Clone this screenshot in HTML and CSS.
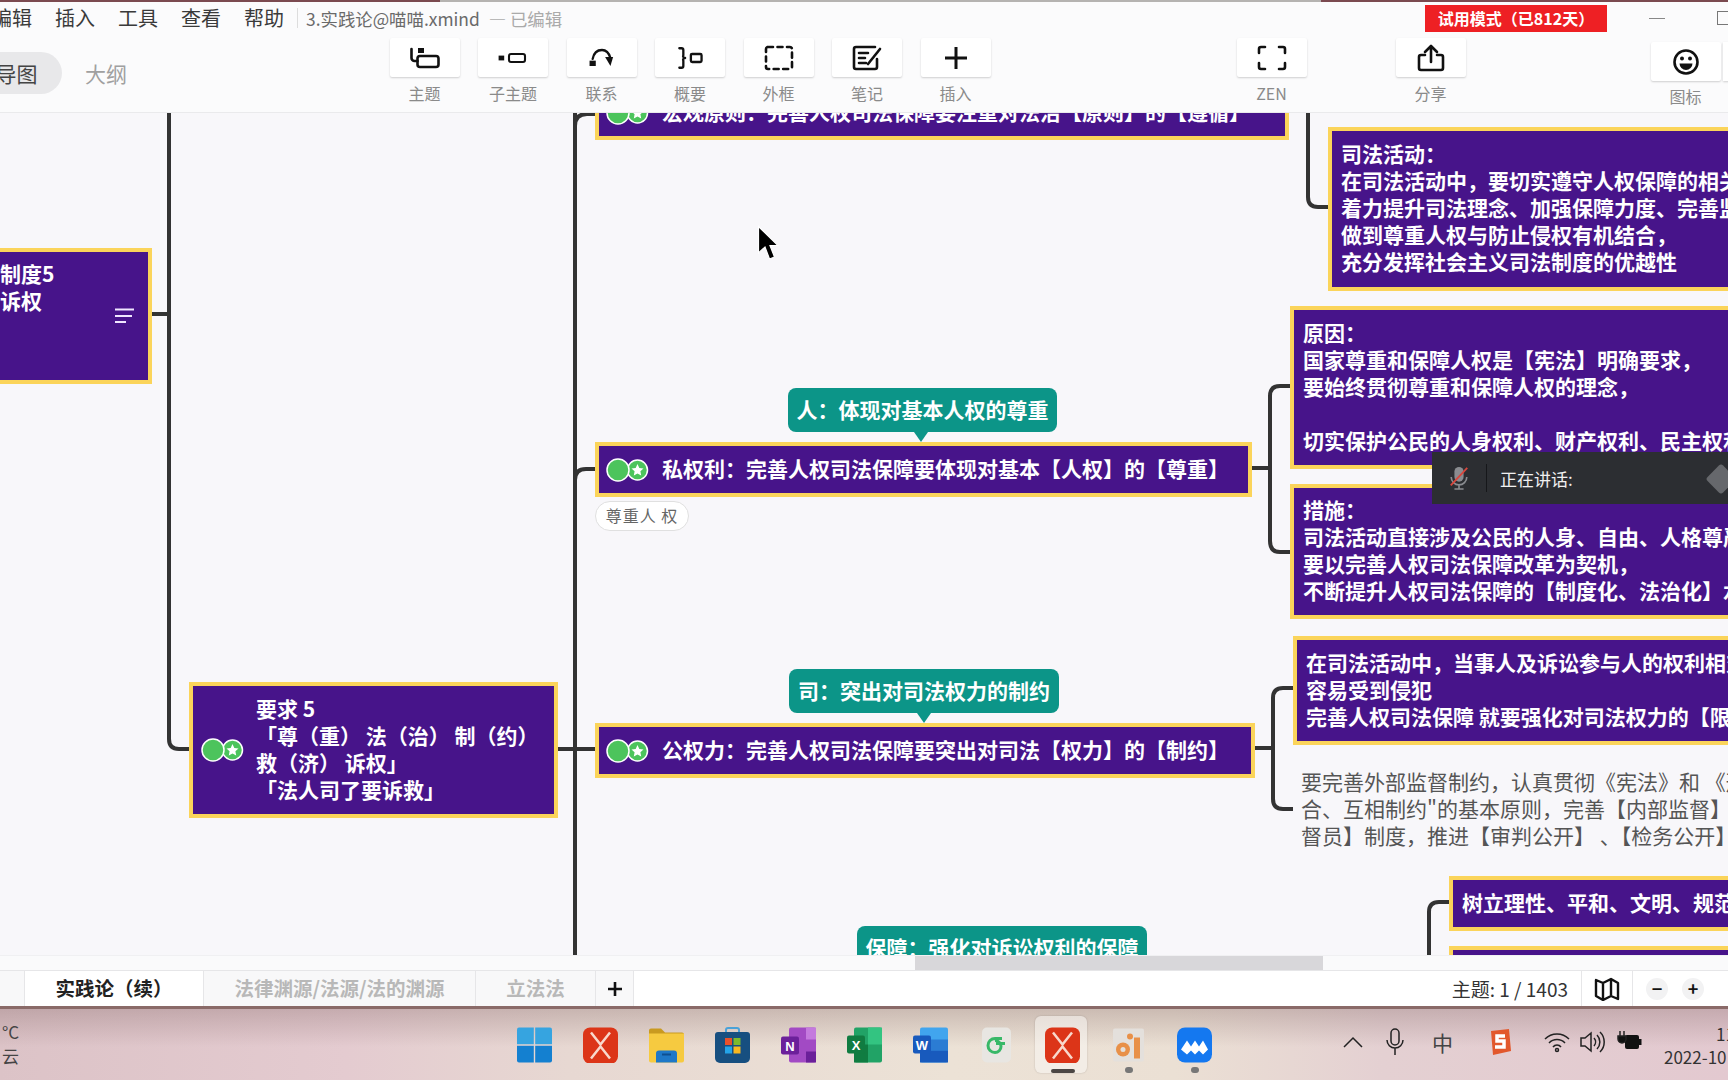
FILE: index.html
```html
<!DOCTYPE html>
<html lang="zh-CN">
<head>
<meta charset="utf-8">
<title>XMind</title>
<link rel="stylesheet" href="styles.css">
</head>
<body>
<div class="app">
  <div class="wall-strip"></div>
  <header class="header">
    <div class="titlebar">
      <nav class="menu"><span>编辑</span><span>插入</span><span>工具</span><span>查看</span><span>帮助</span></nav>
      <div class="title-sep"></div>
      <div class="doc-title">3.实践论@喵喵.xmind<span class="doc-state">— 已编辑</span></div>
      <div class="trial">试用模式（已812天）</div>
      <div class="win-min"></div>
      <div class="win-max"></div>
    </div>
    <div class="toolbar">
      <div class="seg">
        <div class="seg-on">导图</div>
        <div class="seg-off">大纲</div>
      </div>
      <div class="tools">
        <div class="tool"><div class="tool-btn"><svg class="ico" viewBox="0 0 32 30"><rect x="8.5" y="13" width="21" height="11" rx="2.5" class="s"/><path d="M2.5 6v9a3 3 0 0 0 3 3h3" class="s"/><rect x="9" y="5" width="6" height="5" class="f"/></svg></div><div class="tool-label">主题</div></div>
        <div class="tool"><div class="tool-btn"><svg class="ico" viewBox="0 0 40 30"><rect x="2" y="12" width="7" height="6" class="f"/><rect x="15" y="10" width="20" height="10" rx="2.5" class="s"/></svg></div><div class="tool-label">子主题</div></div>
        <div class="tool"><div class="tool-btn"><svg class="ico" viewBox="0 0 36 30"><rect x="4" y="18" width="7" height="6" class="f"/><path d="M7.5 16C9 8 14 6 18 6c5 0 8 4 9.500 9" class="s"/><path d="M21.500 14l9 0-3 10z" class="f"/></svg></div><div class="tool-label">联系</div></div>
        <div class="tool"><div class="tool-btn"><svg class="ico" viewBox="0 0 36 30"><path d="M6 4h2.500a2 2 0 0 1 2 2v6a2 2 0 0 0 2 3 2 2 0 0 0-2 3v6a2 2 0 0 1-2 2H6" class="s"/><rect x="19" y="10.500" width="12" height="9" rx="1.500" class="s"/></svg></div><div class="tool-label">概要</div></div>
        <div class="tool"><div class="tool-btn"><svg class="ico" viewBox="0 0 32 30"><rect x="3" y="4" width="26" height="22" rx="2" class="s dash"/></svg></div><div class="tool-label">外框</div></div>
        <div class="tool"><div class="tool-btn"><svg class="ico" viewBox="0 0 32 30"><path d="M24 4H5a2 2 0 0 0-2 2v18a2 2 0 0 0 2 2h19a2 2 0 0 0 2-2v-8" class="s"/><path d="M8 10h9M8 15h6M8 20h7" class="s"/><path d="M17 21l12-15" class="s"/></svg></div><div class="tool-label">笔记</div></div>
        <div class="tool"><div class="tool-btn"><svg class="ico" viewBox="0 0 32 30"><path d="M16 4v22M5 15h22" class="s thick"/></svg></div><div class="tool-label">插入</div></div>
      </div>
      <div class="tool tool-zen"><div class="tool-btn"><svg class="ico" viewBox="0 0 32 30"><path d="M9 4H5a2 2 0 0 0-2 2v4M23 4h4a2 2 0 0 1 2 2v4M3 20v4a2 2 0 0 0 2 2h4M29 20v4a2 2 0 0 1-2 2h-4" class="s"/></svg></div><div class="tool-label">ZEN</div></div>
      <div class="tool tool-share"><div class="tool-btn"><svg class="ico" viewBox="0 0 32 30"><path d="M10 12H6a2 2 0 0 0-2 2v11a2 2 0 0 0 2 2h20a2 2 0 0 0 2-2V14a2 2 0 0 0-2-2h-4" class="s"/><path d="M16 19V3M10 9l6-6 6 6" class="s"/></svg></div><div class="tool-label">分享</div></div>
      <div class="tool tool-icons"><div class="tool-btn"><svg class="ico" viewBox="0 0 32 30"><circle cx="16" cy="15" r="11.500" class="s"/><circle cx="12" cy="11.500" r="2" class="f"/><circle cx="20" cy="11.500" r="2" class="f"/><path d="M9.500 16.500h13a6.500 6.500 0 0 1-13 0z" class="f"/></svg></div><div class="tool-label">图标</div></div>
      <div class="tool-next"></div>
    </div>
  </header>

  <main class="canvas">
    <svg class="links" viewBox="0 113 1728 842">
      <path d="M152 314H169M169 113V739Q169 749 179 749H189"/>
      <path d="M558 749H595M575 113V955"/>
      <path d="M575 126Q575 114 587 114H595M575 480Q575 469 586 469H595"/>
      <path d="M1308 113V197Q1308 207 1318 207H1328"/>
      <path d="M1252 468H1270M1290 386H1280Q1270 386 1270 396V541Q1270 552 1280 552H1290"/>
      <path d="M1255 748H1273M1293 688H1283Q1273 688 1273 698V799Q1273 809 1283 809H1293"/>
      <path d="M1449 902H1439Q1429 902 1429 912V955"/>
    </svg>

    <div class="node n-sys">
      <div>制度5<br>诉权</div>
      <svg class="note" viewBox="0 0 20 16"><path d="M0 1.500H19M0 8H17M0 14H11"/></svg>
    </div>

    <div class="node n-req">
      <svg class="marks" viewBox="0 0 44 24"><circle cx="31.500" cy="12" r="10" class="m2"/><path d="M31.500 6l1.800 3.900 4.200.5-3.100 2.900.8 4.200-3.700-2.100-3.700 2.100.8-4.200-3.100-2.900 4.200-.5z" class="star"/><circle cx="12" cy="12" r="11" class="m1"/></svg>
      <div class="req-text">要求 5<br>「尊（重） 法（治） 制（约）<br>救（济） 诉权」<br>「法人司了要诉救」</div>
    </div>

    <div class="node n-macro">
      <svg class="marks" viewBox="0 0 44 24"><circle cx="31.500" cy="12" r="10" class="m2"/><path d="M31.500 6l1.800 3.900 4.200.5-3.100 2.900.8 4.200-3.700-2.100-3.700 2.100.8-4.200-3.100-2.900 4.200-.5z" class="star"/><circle cx="12" cy="12" r="11" class="m1"/></svg>
      <div>宏观原则：完善人权司法保障要注重对法治【原则】的【遵循】</div>
    </div>

    <div class="node n-judicial">司法活动：<br>在司法活动中，要切实遵守人权保障的相关规定，<br>着力提升司法理念、加强保障力度、完善监督机制，<br>做到尊重人权与防止侵权有机结合，<br>充分发挥社会主义司法制度的优越性</div>

    <div class="bubble b-ren">人：体现对基本人权的尊重</div>
    <div class="node n-private">
      <svg class="marks" viewBox="0 0 44 24"><circle cx="31.500" cy="12" r="10" class="m2"/><path d="M31.500 6l1.800 3.900 4.200.5-3.100 2.900.8 4.200-3.700-2.100-3.700 2.100.8-4.200-3.100-2.900 4.200-.5z" class="star"/><circle cx="12" cy="12" r="11" class="m1"/></svg>
      <div>私权利：完善人权司法保障要体现对基本【人权】的【尊重】</div>
    </div>
    <div class="pill">尊重人 权</div>

    <div class="node n-reason">原因：<br>国家尊重和保障人权是【宪法】明确要求，<br>要始终贯彻尊重和保障人权的理念，<br><br>切实保护公民的人身权利、财产权利、民主权利</div>
    <div class="node n-measure">措施：<br>司法活动直接涉及公民的人身、自由、人格尊严，<br>要以完善人权司法保障改革为契机，<br>不断提升人权司法保障的【制度化、法治化】水平</div>

    <div class="bubble b-si">司：突出对司法权力的制约</div>
    <div class="node n-public">
      <svg class="marks" viewBox="0 0 44 24"><circle cx="31.500" cy="12" r="10" class="m2"/><path d="M31.500 6l1.800 3.900 4.200.5-3.100 2.900.8 4.200-3.700-2.100-3.700 2.100.8-4.200-3.100-2.900 4.200-.5z" class="star"/><circle cx="12" cy="12" r="11" class="m1"/></svg>
      <div>公权力：完善人权司法保障要突出对司法【权力】的【制约】</div>
    </div>
    <div class="node n-party">在司法活动中，当事人及诉讼参与人的权利相对<br>容易受到侵犯<br>完善人权司法保障 就要强化对司法权力的【限制】</div>
    <div class="plain">要完善外部监督制约，认真贯彻《宪法》和 《刑事诉讼法》<br>合、互相制约"的基本原则，完善【内部监督】 制度<br>督员】制度，推进【审判公开】 、【检务公开】</div>

    <div class="node n-tree">树立理性、平和、文明、规范的司法理念</div>
    <div class="node n-next"></div>
    <div class="bubble b-bao">保障：强化对诉讼权利的保障</div>

    <div class="speaking">
      <svg class="mic-off" viewBox="0 0 24 28"><rect x="7" y="2" width="10" height="16" rx="5" class="mic-b"/><path d="M3.500 13a8.500 8.500 0 0 0 17 0M12 22v4M7 26h10" class="mic-l"/><path d="M3 22L21 3" class="mic-x"/></svg>
      <div class="speak-sep"></div>
      <div class="speak-text">正在讲话:</div>
      <div class="speak-grip"></div>
    </div>

    <svg class="cursor" viewBox="0 0 22 36"><path d="M1.500 1.500V28l6.500-6 4.500 12 5-2-4.500-11.500H21z"/></svg>
  </main>

  <div class="hscroll"><div class="hthumb"></div></div>

  <div class="tabs">
    <div class="tab-stub"></div>
    <div class="tab tab-on">实践论（续）</div>
    <div class="tab tab-law">法律渊源/法源/法的渊源</div>
    <div class="tab tab-leg">立法法</div>
    <div class="tab-add"><svg viewBox="0 0 18 18"><path d="M9 2v14M2 9h14"/></svg></div>
    <div class="status">
      <div class="count">主题: 1 / 1403</div>
      <div class="map"><svg viewBox="0 0 26 24"><path d="M2 3l7 3 8-4 7 4v16l-7-3-8 4-7-4zM9 6v16M17 2v16" /></svg></div>
      <div class="zoom-ctl"><span class="zb">−</span><span class="zb">+</span></div>
    </div>
  </div>

  <footer class="taskbar">
    <div class="weather"><div>°C</div><div>云</div></div>
    <div class="apps">
      <div class="app-ico"><svg viewBox="0 0 35 35"><path d="M0 2a2 2 0 0 1 2-2h14.800v16.800H0z" class="w1"/><path d="M18.200 0H33a2 2 0 0 1 2 2v14.800H18.200z" class="w1"/><path d="M0 18.200h16.800V35H2a2 2 0 0 1-2-2z" class="w2"/><path d="M18.200 18.200H35V33a2 2 0 0 1-2 2H18.200z" class="w2"/></svg></div>
      <div class="app-ico"><svg viewBox="0 0 35 35"><rect width="35" height="36" rx="7" class="xm"/><path d="M8 5l9.500 12L27 5M8 31l9.500-12L27 31" class="xm-l"/></svg></div>
      <div class="app-ico"><svg viewBox="0 0 35 35"><path d="M0 3a2 2 0 0 1 2-2h10l4 4H33a2 2 0 0 1 2 2v6H0z" class="fo1"/><path d="M0 6h35v27a2 2 0 0 1-2 2H2a2 2 0 0 1-2-2z" class="fo2"/><path d="M7 26a3 3 0 0 1 3-3h15a3 3 0 0 1 3 3v9H7z" class="fo3"/><rect x="13" y="26" width="9" height="2" class="fo4"/></svg></div>
      <div class="app-ico"><svg viewBox="0 0 35 36"><path d="M11 7V3a2 2 0 0 1 2-2h9a2 2 0 0 1 2 2v4" class="st-h"/><path d="M0 8a3 3 0 0 1 3-3h29a3 3 0 0 1 3 3v23a5 5 0 0 1-5 5H5a5 5 0 0 1-5-5z" class="st"/><rect x="10" y="11" width="7" height="7" class="r"/><rect x="18.500" y="11" width="7" height="7" class="g"/><rect x="10" y="19.500" width="7" height="7" class="b"/><rect x="18.500" y="19.500" width="7" height="7" class="y"/></svg></div>
      <div class="app-ico"><svg viewBox="0 0 35 35"><path d="M8 2a2 2 0 0 1 2-2h23a2 2 0 0 1 2 2v31a2 2 0 0 1-2 2H10a2 2 0 0 1-2-2z" class="on1"/><rect x="25" y="0" width="10" height="12" class="on2"/><rect x="25" y="24" width="10" height="11" class="on3"/><rect x="0" y="9" width="18" height="18" rx="2" class="on3"/><text x="9" y="23" class="lt">N</text></svg></div>
      <div class="app-ico"><svg viewBox="0 0 35 35"><rect x="7" width="28" height="35" rx="2" class="x1"/><rect x="21" width="14" height="17" class="x2"/><rect x="7" y="17" width="14" height="18" class="x3"/><rect x="0" y="8" width="18" height="18" rx="2" class="x3"/><text x="9" y="22" class="lt">X</text></svg></div>
      <div class="app-ico"><svg viewBox="0 0 35 35"><rect x="7" width="28" height="35" rx="2" class="wd1"/><rect x="7" y="12" width="28" height="11" class="wd2"/><rect x="7" y="23" width="28" height="12" class="wd3"/><rect x="0" y="8" width="18" height="18" rx="2" class="wd3"/><text x="9" y="22" class="lt">W</text></svg></div>
      <div class="app-ico"><svg viewBox="0 0 35 35"><rect x="3" y="0" width="29" height="35" rx="5" class="gr-b"/><path d="M23 11h-7a6 6 0 0 0 0 14 6 6 0 0 0 0-12M17 16h9" class="gr-l"/></svg></div>
      <div class="app-ico app-active"><svg viewBox="0 0 35 35"><rect width="35" height="36" rx="7" class="xm"/><path d="M8 5l9.500 12L27 5M8 31l9.500-12L27 31" class="xm-l"/></svg></div>
      <div class="app-ico app-run"><svg viewBox="0 0 35 35"><rect x="2" y="1" width="31" height="33" rx="2" class="cam"/><circle cx="12" cy="22" r="7" class="cam-o"/><circle cx="12" cy="22" r="2.500" class="cam"/><rect x="23" y="10" width="6" height="21" class="cam-o"/><circle cx="19" cy="9" r="3" class="cam-o"/></svg></div>
      <div class="app-ico app-run"><svg viewBox="0 0 35 35"><rect width="35" height="35" rx="8" class="bl"/><path d="M4 22l6-9 4 6 4-6 4 6 4-6 5 9-5 5-4-4-4 4-4-4-4 4z" class="bl-l"/></svg></div>
    </div>
    <div class="tray">
      <svg class="t-caret" viewBox="0 0 20 12"><path d="M1 11L10 2l9 9"/></svg>
      <svg class="t-mic" viewBox="0 0 18 28"><rect x="5" y="1" width="8" height="16" rx="4"/><path d="M1 12a8 8 0 0 0 16 0M9 20v7"/></svg>
      <div class="t-ime">中</div>
      <svg class="t-s" viewBox="0 0 24 28"><path d="M3 3l18-2 2 22-18 4z" class="s-bg"/><path d="M17 8H9v5h7v6H7" class="s-l"/></svg>
      <svg class="t-wifi" viewBox="0 0 26 22"><path d="M1 8a17 17 0 0 1 24 0M5 12a11 11 0 0 1 16 0M9 16a5 5 0 0 1 8 0"/><circle cx="13" cy="19" r="1.500"/></svg>
      <svg class="t-vol" viewBox="0 0 26 24"><path d="M2 8h4l6-5v18l-6-5H2zM15 8a6 6 0 0 1 0 8M18 5a10 10 0 0 1 0 14M21 2a14 14 0 0 1 0 20"/></svg>
      <svg class="t-bat" viewBox="0 0 26 22"><rect x="8" y="5" width="14" height="14" rx="2"/><rect x="22" y="9" width="2.500" height="6"/><path d="M3 1v5M7 1v5M1 6h8v3a4 4 0 0 1-8 0z" class="b-pl"/></svg>
      <div class="clock"><div class="c-time">11</div><div>2022-10</div></div>
    </div>
  </footer>
</div>
</body>
</html>
```

FILE: styles.css
```css
* { box-sizing: border-box; }
html, body { margin: 0; height: 100%; overflow: hidden; }
body { font-family: "Noto Sans CJK SC", "Noto Sans", sans-serif; color: #333; }
.app { width: 1728px; height: 1080px; display: flex; flex-direction: column; overflow: hidden; background: #f8f7fa; }

.wall-strip { height: 2px; flex: none; background: linear-gradient(90deg, #7b4a50 0 440px, #b5b3b1 440px 1321px, #7b4a50 1321px); }

.header { height: 111px; flex: none; background: #fbfbfc; border-bottom: 1px solid #eaeaec; display: flex; flex-direction: column; }
.titlebar { height: 36px; flex: none; display: flex; align-items: center; }
.menu { display: flex; flex: none; white-space: nowrap; gap: 23px; margin-left: -8px; margin-bottom: 4px; font-size: 20px; line-height: 32px; color: #3a3a3a; }
.title-sep { width: 1px; height: 20px; flex: none; background: #ddd; margin-left: 13px; margin-bottom: 4px; }
.doc-title { flex: none; margin-left: 8px; margin-bottom: 4px; font-size: 17.400px; color: #6a6a6a; white-space: nowrap; width: 1119px; }
.doc-state { margin-left: 9px; color: #aaa; }
.trial { width: 182px; height: 27px; margin-bottom: 3px; background: #ee2024; color: #fff; font-weight: 700; font-size: 16px; line-height: 27px; text-align: center; white-space: nowrap; flex: none; }
.win-min { width: 16px; height: 1px; background: #888; margin-left: 42px; margin-bottom: 4px; flex: none; }
.win-max { width: 16px; height: 14px; border: 1px solid #777; margin-left: 52px; margin-bottom: 4px; flex: none; }

.toolbar { flex: 1; display: flex; align-items: flex-start; position: relative; }
.seg { display: flex; align-items: center; margin-left: -29px; margin-top: 14px; width: 418.500px; flex: none; }
.seg-on { width: 91px; height: 42px; border-radius: 21px; background: #e8e8ea; text-align: center; font-size: 21px; line-height: 42px; color: #444; }
.seg-off { margin-left: 23px; font-size: 21px; color: #a0a0a0; }
.tools { display: flex; gap: 18.500px; flex: none; }
.tool { width: 70px; flex: none; display: flex; flex-direction: column; align-items: center; }
.tool-btn { width: 70px; height: 39px; background: #fff; box-shadow: 0 1px 2px rgba(0,0,0,.18); border-radius: 2px; display: flex; align-items: center; justify-content: center; }
.tool-label { margin-top: 5px; font-size: 16px; line-height: 22px; color: #8a8a8a; }
.tool-zen { margin-left: 246px; }
.tool-share { margin-left: 89px; }
.tool-icons { margin-left: 185px; margin-top: 4px; }
.tool-icons .tool-label { margin-top: 4px; }
.tool-next { width: 20px; height: 39px; margin-top: 4px; margin-left: 2px; flex: none; background: #fff; box-shadow: 0 1px 2px rgba(0,0,0,.18); }
.ico { width: 32px; height: 30px; }
.ico .s { fill: none; stroke: #111; stroke-width: 2.600; stroke-linecap: round; stroke-linejoin: round; }
.ico .f { fill: #111; }
.ico .dash { stroke-dasharray: 5 4.500; }
.ico .thick { stroke-width: 3; stroke-linecap: butt; }

.canvas { position: relative; flex: 1; min-height: 0; overflow: hidden; background: #f8f7fa; }
.links { position: absolute; left: 0; top: 0; width: 1728px; height: 842px; }
.links path { fill: none; stroke: #333; stroke-width: 4; }

.node { position: absolute; display: flex; align-items: center; background: #47148a; border: 4px solid #fbd45a; padding-bottom: 3px; color: #fff; font-weight: 700; font-size: 21px; line-height: 27px; white-space: nowrap; overflow: hidden; }
.marks { width: 44px; height: 24px; flex: none; margin-right: 12px; margin-left: 7px; margin-bottom: -3px; }
.m1 { fill: #4cc45c; stroke: #fff; stroke-width: 1.500; }
.m2 { fill: #4cc45c; stroke: #fff; stroke-width: 1.500; }
.star { fill: #fff; }

.n-sys { left: -14px; top: 135px; width: 166px; height: 136px; padding: 8px 0 0 10px; align-items: flex-start; }
.note { position: absolute; left: 125px; top: 56px; width: 20px; height: 16px; }
.note path { fill: none; stroke: #f0e6ff; stroke-width: 1.800; }
.n-req { left: 189px; top: 569px; width: 369px; height: 136px; padding-left: 1px; }
.req-text { margin-left: -1px; white-space: nowrap; }
.n-macro { left: 595px; top: -28px; width: 694px; height: 55px; }
.n-judicial { left: 1328px; top: 14px; width: 500px; height: 164px; padding-left: 9px; }
.n-private { left: 595px; top: 329px; width: 657px; height: 55px; }
.n-public { left: 595px; top: 610px; width: 660px; height: 55px; }
.n-reason { left: 1290px; top: 193px; width: 500px; height: 163px; padding-left: 9px; }
.n-measure { left: 1290px; top: 371px; width: 500px; height: 135px; padding-left: 9px; }
.n-party { left: 1293px; top: 523px; width: 500px; height: 109px; padding-left: 9px; }
.n-tree { left: 1449px; top: 763px; width: 500px; height: 55px; padding-left: 9px; }
.n-next { left: 1449px; top: 833px; width: 500px; height: 55px; }

.bubble { position: absolute; height: 44px; border-radius: 8px; background: #0c9588; color: #fff; font-weight: 700; font-size: 21px; line-height: 42px; text-align: center; white-space: nowrap; }
.b-ren::after, .b-si::after { content: ""; position: absolute; top: 44px; border: 7px solid transparent; border-top: 10px solid #0c9588; border-bottom: 0; }
.b-ren { left: 788px; top: 275px; width: 269px; }
.b-ren::after { left: 126px; }
.b-si { left: 789px; top: 556px; width: 270px; }
.b-si::after { left: 128px; }
.b-bao { left: 857px; top: 813px; width: 290px; }

.pill { position: absolute; left: 595px; top: 388px; width: 94px; height: 30px; background: #fff; border: 1px solid #e0e0e0; border-radius: 15px; font-size: 16px; line-height: 26px; letter-spacing: 1px; color: #666; text-align: center; white-space: nowrap; }

.plain { position: absolute; left: 1301px; top: 655px; font-size: 21px; line-height: 27px; color: #555; white-space: nowrap; }

.speaking { position: absolute; left: 1432px; top: 339px; width: 296px; height: 52px; background: #2c2e32; display: flex; align-items: center; }
.mic-off { width: 22px; height: 26px; margin-left: 16px; flex: none; }
.mic-b { fill: #8a8c90; }
.mic-l { fill: none; stroke: #8a8c90; stroke-width: 1.800; }
.mic-x { stroke: #d8463c; stroke-width: 2; }
.speak-sep { width: 1px; height: 28px; background: #16171a; margin-left: 16px; flex: none; }
.speak-text { margin-left: 13px; font-size: 17px; color: #f0f0f0; white-space: nowrap; }
.speak-grip { position: absolute; left: 278px; top: 16px; width: 22px; height: 22px; border-radius: 3px; background: #66686c; transform: rotate(45deg); }

.cursor { position: absolute; left: 757px; top: 112px; width: 22px; height: 36px; }
.cursor path { fill: #000; stroke: #fff; stroke-width: 1.200; }

.hscroll { height: 15px; flex: none; background: #fafafb; border-top: 1px solid #f0f0f2; }
.hthumb { width: 408px; height: 14px; margin-left: 915px; background: #d8d7da; }

.tabs { height: 36px; flex: none; display: flex; background: #fff; border-top: 1px solid #e6e6e8; }
.tab-stub { width: 25px; flex: none; background: #f8f8f9; border-right: 1px solid #e6e6e8; }
.tab { flex: none; font-size: 19.500px; font-weight: 700; line-height: 33px; text-align: center; white-space: nowrap; border-right: 1px solid #e6e6e8; }
.tab-on { width: 179px; background: #fff; color: #222; }
.tab-law { width: 272px; background: #f8f8f9; color: #b8b8b8; }
.tab-leg { width: 120px; background: #f8f8f9; color: #b8b8b8; }
.tab-add { width: 38px; flex: none; display: flex; align-items: center; justify-content: center; background: #f8f8f9; border-right: 1px solid #e6e6e8; }
.tab-add svg { width: 18px; height: 18px; }
.tab-add path { fill: none; stroke: #111; stroke-width: 2.600; }
.status { margin-left: auto; display: flex; align-items: center; height: 35px; }
.count { font-size: 19px; color: #333; margin-right: 13px; white-space: nowrap; }
.map { width: 52px; height: 35px; border-left: 1px solid #e6e6e8; border-right: 1px solid #e6e6e8; display: flex; align-items: center; justify-content: center; }
.map svg { width: 26px; height: 24px; }
.map path { fill: none; stroke: #111; stroke-width: 2.400; stroke-linejoin: round; }
.zoom-ctl { width: 95px; display: flex; gap: 14px; padding-left: 13px; }
.zb { width: 22px; height: 22px; border-radius: 50%; background: #f2f2f3; color: #111; font-weight: 700; font-size: 18px; line-height: 21px; text-align: center; }

.taskbar { height: 74px; flex: none; display: flex; align-items: center; position: relative; border-top: 3px solid #8a6a68; background:
  linear-gradient(180deg, rgba(120,90,90,.28) 0, rgba(120,90,90,0) 38px),
  linear-gradient(90deg, #dcc3c7 0, #e4cbd0 20%, #e7d8d2 33%, #ece2d6 55%, #ebe0d4 68%, #e4d0d2 80%, #e3c9d0 100%); }
.weather { width: 515px; flex: none; font-size: 17px; line-height: 24px; color: #444; white-space: nowrap; margin-left: 2px; margin-top: -2px; }
.apps { display: flex; gap: 31px; flex: none; margin-top: 1px; }
.app-ico { width: 35px; height: 36px; position: relative; flex: none; }
.app-ico svg { width: 35px; height: 36px; display: block; position: relative; }
.app-active::before { content: ""; position: absolute; left: -10px; top: -11px; width: 52px; height: 57px; background: rgba(250,247,244,.55); border-radius: 6px; box-shadow: 0 0 2px rgba(0,0,0,.2); }
.app-active::after { content: ""; position: absolute; left: 6px; top: 42px; width: 24px; height: 4px; border-radius: 2px; background: #4b4644; }
.app-run::after { content: ""; position: absolute; left: 14px; top: 40px; width: 8px; height: 6px; border-radius: 3px; background: #777; }
.w1 { fill: #36a4e0; } .w2 { fill: #1480d0; }
.xm { fill: #dc3518; } .xm-l { fill: none; stroke: #f8d8cc; stroke-width: 2.500; }
.fo1 { fill: #c99a20; } .fo2 { fill: #f6ca40; } .fo3 { fill: #1e78c8; } .fo4 { fill: #0e4f90; }
.st { fill: #174f80; } .st-h { fill: none; stroke: #4aa2d8; stroke-width: 2; }
.r { fill: #e8502a; } .g { fill: #7cba2c; } .b { fill: #24a4e8; } .y { fill: #f8b820; }
.on1 { fill: #a24ac4; } .on2 { fill: #c47ade; } .on3 { fill: #6b209a; }
.x1 { fill: #21a366; } .x2 { fill: #33c481; } .x3 { fill: #107c41; }
.wd1 { fill: #41a5ee; } .wd2 { fill: #2b7cd3; } .wd3 { fill: #185abd; }
.lt { fill: #fff; font-size: 13px; font-weight: 700; text-anchor: middle; font-family: "Liberation Sans", sans-serif; }
.gr-b { fill: #e8e6e2; } .gr-l { fill: none; stroke: #38b868; stroke-width: 3; }
.cam { fill: #e4e0dc; } .cam-o { fill: #e89048; }
.bl { fill: #1478f0; } .bl-l { fill: #fff; }

.tray { position: absolute; left: 0; top: 0; width: 1728px; height: 71px; }
.t-caret, .t-mic, .t-ime, .t-s, .t-wifi, .t-vol, .t-bat { position: absolute; }
.tray svg { fill: none; stroke: #222; stroke-width: 1.500; }
.t-caret { left: 1343px; top: 27px; width: 20px; height: 12px; }
.t-mic { left: 1386px; top: 19px; width: 18px; height: 28px; }
.t-ime { left: 1432px; top: 18px; font-size: 21px; line-height: 30px; color: #444; }
.t-s { left: 1488px; top: 19px; width: 24px; height: 28px; }
.tray .t-s { stroke: none; }
.s-bg { fill: #e2582c; } .s-l { fill: none; stroke: #fff; stroke-width: 3.500; }
.t-wifi { left: 1544px; top: 22px; width: 26px; height: 22px; }
.t-vol { left: 1579px; top: 21px; width: 26px; height: 24px; }
.t-bat { left: 1617px; top: 21px; width: 26px; height: 22px; }
.t-bat rect { fill: #111; stroke: none; }
.t-bat .b-pl { fill: #111; }
.clock { position: absolute; left: 1664px; top: 13px; font-size: 17px; line-height: 23px; color: #333; white-space: nowrap; }
.c-time { padding-left: 52px; }
```
